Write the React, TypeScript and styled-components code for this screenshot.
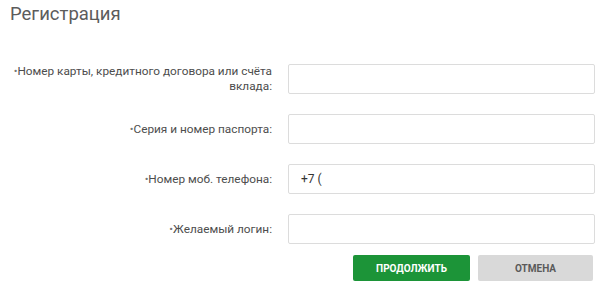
import { Fragment } from "react";
import styled, { createGlobalStyle } from "styled-components";

const GlobalStyle = createGlobalStyle`
  body {
    margin: 0;
    background: #fff;
    font-family: Roboto, "Liberation Sans", Arial, sans-serif;
  }
`;

const Page = styled.div`
  width: 600px;
  height: 288px;
  padding: 0 5px 0 0;
  box-sizing: border-box;
`;

const Title = styled.h1`
  margin: 0;
  padding: 2px 0 0 10px;
  height: 28px;
  font-size: 18.5px;
  line-height: 24px;
  font-weight: 400;
  color: #5c5c5c;
`;

const Form = styled.form`
  display: grid;
  grid-template-columns: 272px 1fr;
  column-gap: 16px;
  row-gap: 20px;
  margin-top: 34px;
  align-items: center;
`;

const Label = styled.label`
  text-align: right;
  font-size: 11.8px;
  line-height: 15px;
  color: #4d4d4d;
`;

const Bullet = styled.span`
  font-size: 11px;
  color: #777;
`;

const Field = styled.input`
  height: 30px;
  box-sizing: border-box;
  border: 1px solid #dcdcdc;
  border-radius: 2px;
  padding: 0 12px;
  font-family: inherit;
  font-size: 12px;
  color: #333;
  outline: none;
  width: 100%;
`;

const Actions = styled.div`
  grid-column: 2;
  display: flex;
  justify-content: flex-end;
  gap: 8px;
  margin-top: -9px;
  padding-right: 2px;
`;

const Button = styled.button<{ $primary?: boolean }>`
  width: ${(p) => (p.$primary ? "117px" : "115px")};
  height: 26px;
  border: none;
  border-radius: 2px;
  font-family: inherit;
  font-size: 10px;
  font-weight: 700;
  text-transform: uppercase;
  cursor: pointer;
  background: ${(p) => (p.$primary ? "#1c9438" : "#d9d9d9")};
  color: ${(p) => (p.$primary ? "#fff" : "#5a5a5a")};
`;

const fields = [
  { id: "card", label: "Номер карты, кредитного договора или счёта вклада:", value: "" },
  { id: "passport", label: "Серия и номер паспорта:", value: "" },
  { id: "phone", label: "Номер моб. телефона:", value: "+7 (" },
  { id: "login", label: "Желаемый логин:", value: "" },
];

export default function App() {
  return (
    <Page>
      <GlobalStyle />
      <Title>Регистрация</Title>
      <Form onSubmit={(e) => e.preventDefault()}>
        {fields.map((f) => (
          <Fragment key={f.id}>
            <Label htmlFor={f.id}>
              <Bullet>•</Bullet>
              {f.label}
            </Label>
            <Field id={f.id} defaultValue={f.value} />
          </Fragment>
        ))}
        <Actions>
          <Button type="submit" $primary>
            Продолжить
          </Button>
          <Button type="button">Отмена</Button>
        </Actions>
      </Form>
    </Page>
  );
}
